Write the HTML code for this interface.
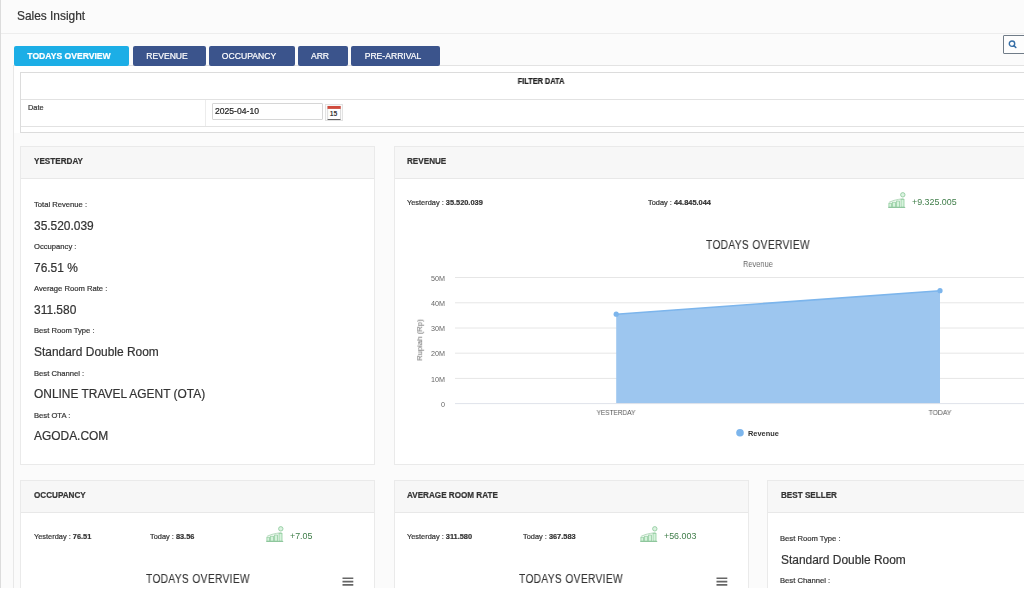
<!DOCTYPE html>
<html><head><meta charset="utf-8"><style>
html,body{margin:0;padding:0;background:#fff;}
#wrap{position:relative;width:1024px;height:600px;overflow:hidden;font-family:"Liberation Sans",sans-serif;}
.r{position:absolute;}
.t{position:absolute;line-height:1;white-space:nowrap;will-change:transform;-webkit-text-stroke:0.2px currentColor;}
b{font-weight:bold;}
</style></head><body><div id="wrap">
<div class="r" style="left:0px;top:0px;width:1024px;height:588px;background:#fbfbfb;"></div>
<div class="r" style="left:0px;top:0px;width:1px;height:588px;background:#dcdcdc;"></div>
<div class="t" style="left:17.00px;top:11.42px;font-size:11.90px;font-weight:normal;color:#333;">Sales Insight</div>
<div class="r" style="left:1px;top:33px;width:1023px;height:1px;background:#ededed;"></div>
<div class="r" style="left:1003px;top:35px;width:30px;height:19px;background:#fdfdfd;border:1px solid #707c88;box-sizing:border-box;border-radius:1px;"></div>
<svg class="r" style="left:1006px;top:38px" width="12" height="12" viewBox="0 0 12 12"><circle cx="6" cy="5.7" r="2.7" fill="none" stroke="#356ea6" stroke-width="1.4"/><line x1="8" y1="7.7" x2="9.8" y2="9.5" stroke="#356ea6" stroke-width="1.6" stroke-linecap="round"/></svg>
<div class="r" style="left:13px;top:65px;width:1011px;height:523px;background:#fff;border-left:1px solid #e8e8e8;border-top:1px solid #e3e3e3;box-sizing:border-box;"></div>
<div class="r" style="left:14px;top:133px;width:1010px;height:455px;background:#fbfbfb;"></div>
<div class="r" style="left:14px;top:46px;width:115px;height:19.5px;background:#1caee6;border-radius:2px;"></div>
<div class="t" style="left:68.70px;top:51.92px;font-size:8.60px;font-weight:bold;color:#fff;transform:translateX(-50%);transform-origin:center top;">TODAYS OVERVIEW</div>
<div class="r" style="left:133px;top:46px;width:73px;height:19.5px;background:#3b548c;border-radius:2px;"></div>
<div class="t" style="left:166.70px;top:51.92px;font-size:8.60px;font-weight:normal;color:#fff;transform:translateX(-50%);transform-origin:center top;">REVENUE</div>
<div class="r" style="left:209px;top:46px;width:86px;height:19.5px;background:#3b548c;border-radius:2px;"></div>
<div class="t" style="left:249.20px;top:51.92px;font-size:8.60px;font-weight:normal;color:#fff;transform:translateX(-50%);transform-origin:center top;">OCCUPANCY</div>
<div class="r" style="left:298px;top:46px;width:50px;height:19.5px;background:#3b548c;border-radius:2px;"></div>
<div class="t" style="left:320.20px;top:51.92px;font-size:8.60px;font-weight:normal;color:#fff;transform:translateX(-50%);transform-origin:center top;">ARR</div>
<div class="r" style="left:351px;top:46px;width:89px;height:19.5px;background:#3b548c;border-radius:2px;"></div>
<div class="t" style="left:392.70px;top:51.92px;font-size:8.60px;font-weight:normal;color:#fff;transform:translateX(-50%);transform-origin:center top;">PRE-ARRIVAL</div>
<div class="r" style="left:20px;top:72px;width:1042px;height:61px;border:1px solid #dcdcdc;box-sizing:border-box;background:#fff;"></div>
<div class="r" style="left:21px;top:99px;width:1040px;height:1px;background:#e2e2e2;"></div>
<div class="r" style="left:21px;top:126px;width:1040px;height:1px;background:#e2e2e2;"></div>
<div class="r" style="left:205px;top:100px;width:1px;height:26px;background:#ececec;"></div>
<div class="t" style="left:541.00px;top:78.36px;font-size:8.20px;font-weight:bold;color:#222;transform:translateX(-50%) scaleX(0.9);transform-origin:center top;">FILTER DATA</div>
<div class="t" style="left:27.50px;top:104.43px;font-size:7.40px;font-weight:normal;color:#333;">Date</div>
<div class="r" style="left:212px;top:103px;width:111px;height:17px;border:1px solid #d6d6d6;box-sizing:border-box;background:#fff;border-radius:1px;"></div>
<div class="t" style="left:215.00px;top:107.02px;font-size:8.60px;font-weight:normal;color:#222;">2025-04-10</div>
<svg class="r" style="left:325px;top:104px" width="18" height="17" viewBox="0 0 18 17">
<rect x="0.5" y="0.5" width="17" height="16" fill="#fbfbfb" stroke="#e2e2e2"/>
<rect x="2.8" y="2.2" width="12.6" height="13.3" fill="#fff" stroke="#c8c8c8" stroke-width="0.6"/>
<rect x="2.5" y="2" width="13.2" height="2.9" fill="#cf4a3c"/>
<path d="M2.6 15.5 H15.5" stroke="#555" stroke-width="0.9"/>
<text x="8.6" y="12.4" font-size="6.8" font-family="Liberation Sans" font-weight="bold" fill="#3a3a3a" text-anchor="middle">15</text>
</svg>
<div class="r" style="left:20px;top:146px;width:355px;height:319px;background:#fff;border:1px solid #eaeaea;box-sizing:border-box;"></div>
<div class="r" style="left:21px;top:147px;width:353px;height:32px;background:#f7f7f7;border-bottom:1px solid #e8e8e8;box-sizing:border-box;"></div>
<div class="t" style="left:33.50px;top:158.20px;font-size:8.15px;font-weight:bold;color:#333;">YESTERDAY</div>
<div class="t" style="left:33.50px;top:200.92px;font-size:7.65px;font-weight:normal;color:#333;">Total Revenue :</div>
<div class="t" style="left:33.70px;top:220.68px;font-size:11.95px;font-weight:normal;color:#333;">35.520.039</div>
<div class="t" style="left:33.50px;top:243.07px;font-size:7.65px;font-weight:normal;color:#333;">Occupancy :</div>
<div class="t" style="left:33.70px;top:262.83px;font-size:11.95px;font-weight:normal;color:#333;">76.51 %</div>
<div class="t" style="left:33.50px;top:285.22px;font-size:7.65px;font-weight:normal;color:#333;">Average Room Rate :</div>
<div class="t" style="left:33.70px;top:304.98px;font-size:11.95px;font-weight:normal;color:#333;">311.580</div>
<div class="t" style="left:33.50px;top:327.37px;font-size:7.65px;font-weight:normal;color:#333;">Best Room Type :</div>
<div class="t" style="left:33.70px;top:347.13px;font-size:11.95px;font-weight:normal;color:#333;">Standard Double Room</div>
<div class="t" style="left:33.50px;top:369.52px;font-size:7.65px;font-weight:normal;color:#333;">Best Channel :</div>
<div class="t" style="left:33.70px;top:389.28px;font-size:11.95px;font-weight:normal;color:#333;">ONLINE TRAVEL AGENT (OTA)</div>
<div class="t" style="left:33.50px;top:411.67px;font-size:7.65px;font-weight:normal;color:#333;">Best OTA :</div>
<div class="t" style="left:33.70px;top:431.43px;font-size:11.95px;font-weight:normal;color:#333;">AGODA.COM</div>
<div class="r" style="left:394px;top:146px;width:727px;height:319px;background:#fff;border:1px solid #eaeaea;box-sizing:border-box;"></div>
<div class="r" style="left:395px;top:147px;width:725px;height:32px;background:#f7f7f7;border-bottom:1px solid #e8e8e8;box-sizing:border-box;"></div>
<div class="t" style="left:406.70px;top:158.20px;font-size:8.15px;font-weight:bold;color:#333;">REVENUE</div>
<div class="t" style="left:407.00px;top:198.53px;font-size:7.40px;font-weight:normal;color:#333;">Yesterday : <b>35.520.039</b></div>
<div class="t" style="left:647.50px;top:198.53px;font-size:7.40px;font-weight:normal;color:#333;">Today : <b>44.845.044</b></div>
<svg class="r" style="left:888.0px;top:191.8px" width="19" height="17" viewBox="0 0 19 17">
<g fill="#d6f3dc" stroke="#92cc9f" stroke-width="0.8">
<rect x="0.9" y="11.2" width="2.6" height="4"/>
<rect x="4.6" y="10.2" width="2.8" height="5"/>
<rect x="8.6" y="9" width="2.8" height="6.2"/>
<rect x="13" y="7.4" width="3" height="7.8"/>
</g>
<path d="M0.3 15.4 H17.2" stroke="#8cc49a" stroke-width="1.1"/>
<path d="M1.2 10.2 L6 8.4 L10.5 7.4 L15.5 6.6" fill="none" stroke="#9fcfaa" stroke-width="0.8"/>
<circle cx="14.8" cy="2.8" r="2.2" fill="#dcf3e1" stroke="#92cc9f" stroke-width="0.9"/>
</svg>
<div class="t" style="left:912.00px;top:197.86px;font-size:8.90px;font-weight:normal;color:#3f7d49;-webkit-text-stroke:0;">+9.325.005</div>
<div class="t" style="left:758.20px;top:239.52px;font-size:11.90px;font-weight:normal;color:#333;transform:translateX(-50%) scaleX(0.86);transform-origin:center top;letter-spacing:0.4px;-webkit-text-stroke:0.1px currentColor;">TODAYS OVERVIEW</div>
<div class="t" style="left:758.00px;top:260.02px;font-size:8.60px;font-weight:normal;color:#666;transform:translateX(-50%) scaleX(0.84);transform-origin:center top;letter-spacing:0.15px;-webkit-text-stroke:0;">Revenue</div>
<svg class="r" style="left:0;top:0" width="1024" height="600"><line x1="455" y1="378.4" x2="1102" y2="378.4" stroke="#e6e6e6" stroke-width="1"/><line x1="455" y1="353.2" x2="1102" y2="353.2" stroke="#e6e6e6" stroke-width="1"/><line x1="455" y1="328.0" x2="1102" y2="328.0" stroke="#e6e6e6" stroke-width="1"/><line x1="455" y1="302.8" x2="1102" y2="302.8" stroke="#e6e6e6" stroke-width="1"/><line x1="455" y1="277.5" x2="1102" y2="277.5" stroke="#e6e6e6" stroke-width="1"/><polygon points="616.2,403.6 616.2,314.2 940,290.7 940,403.6" fill="#9dc6ef"/><polyline points="616.2,314.2 940,290.7" fill="none" stroke="#7cb5ec" stroke-width="1.6"/><line x1="455" y1="403.6" x2="1102" y2="403.6" stroke="#dfe3ea" stroke-width="1"/><circle cx="616.2" cy="314.2" r="2.6" fill="#7cb5ec"/><circle cx="940" cy="290.7" r="2.6" fill="#7cb5ec"/><circle cx="740" cy="432.7" r="3.8" fill="#7cb5ec"/></svg>
<div class="t" style="left:444.70px;top:400.80px;font-size:7.20px;font-weight:normal;color:#666;transform:translateX(-100%);transform-origin:right top;-webkit-text-stroke:0;">0</div>
<div class="t" style="left:444.70px;top:375.60px;font-size:7.20px;font-weight:normal;color:#666;transform:translateX(-100%);transform-origin:right top;-webkit-text-stroke:0;">10M</div>
<div class="t" style="left:444.70px;top:350.40px;font-size:7.20px;font-weight:normal;color:#666;transform:translateX(-100%);transform-origin:right top;-webkit-text-stroke:0;">20M</div>
<div class="t" style="left:444.70px;top:325.20px;font-size:7.20px;font-weight:normal;color:#666;transform:translateX(-100%);transform-origin:right top;-webkit-text-stroke:0;">30M</div>
<div class="t" style="left:444.70px;top:300.00px;font-size:7.20px;font-weight:normal;color:#666;transform:translateX(-100%);transform-origin:right top;-webkit-text-stroke:0;">40M</div>
<div class="t" style="left:444.70px;top:274.70px;font-size:7.20px;font-weight:normal;color:#666;transform:translateX(-100%);transform-origin:right top;-webkit-text-stroke:0;">50M</div>
<div class="t" style="left:616.00px;top:408.90px;font-size:7.20px;font-weight:normal;color:#555;transform:translateX(-50%) scaleX(0.9);transform-origin:center top;-webkit-text-stroke:0;">YESTERDAY</div>
<div class="t" style="left:940.30px;top:408.90px;font-size:7.20px;font-weight:normal;color:#555;transform:translateX(-50%) scaleX(0.95);transform-origin:center top;-webkit-text-stroke:0;">TODAY</div>
<div class="t" style="left:748.00px;top:429.93px;font-size:7.40px;font-weight:bold;color:#333;-webkit-text-stroke:0;">Revenue</div>
<div class="t" style="left:419.5px;top:340px;font-size:7.7px;color:#666;-webkit-text-stroke:0;transform:translate(-50%,-50%) rotate(-90deg);transform-origin:center;line-height:1">Rupiah (Rp)</div>
<div class="r" style="left:20px;top:480px;width:355px;height:200px;background:#fff;border:1px solid #eaeaea;box-sizing:border-box;"></div>
<div class="r" style="left:21px;top:481px;width:353px;height:32px;background:#f7f7f7;border-bottom:1px solid #e8e8e8;box-sizing:border-box;"></div>
<div class="t" style="left:33.50px;top:492.20px;font-size:8.15px;font-weight:bold;color:#333;">OCCUPANCY</div>
<div class="t" style="left:33.50px;top:532.93px;font-size:7.40px;font-weight:normal;color:#333;">Yesterday : <b>76.51</b></div>
<div class="t" style="left:149.80px;top:532.93px;font-size:7.40px;font-weight:normal;color:#333;">Today : <b>83.56</b></div>
<svg class="r" style="left:266.1px;top:526.2px" width="19" height="17" viewBox="0 0 19 17">
<g fill="#d6f3dc" stroke="#92cc9f" stroke-width="0.8">
<rect x="0.9" y="11.2" width="2.6" height="4"/>
<rect x="4.6" y="10.2" width="2.8" height="5"/>
<rect x="8.6" y="9" width="2.8" height="6.2"/>
<rect x="13" y="7.4" width="3" height="7.8"/>
</g>
<path d="M0.3 15.4 H17.2" stroke="#8cc49a" stroke-width="1.1"/>
<path d="M1.2 10.2 L6 8.4 L10.5 7.4 L15.5 6.6" fill="none" stroke="#9fcfaa" stroke-width="0.8"/>
<circle cx="14.8" cy="2.8" r="2.2" fill="#dcf3e1" stroke="#92cc9f" stroke-width="0.9"/>
</svg>
<div class="t" style="left:290.10px;top:532.26px;font-size:8.90px;font-weight:normal;color:#3f7d49;-webkit-text-stroke:0;">+7.05</div>
<div class="t" style="left:197.60px;top:574.42px;font-size:11.90px;font-weight:normal;color:#333;transform:translateX(-50%) scaleX(0.86);transform-origin:center top;letter-spacing:0.4px;-webkit-text-stroke:0.1px currentColor;">TODAYS OVERVIEW</div>
<svg class="r" style="left:342px;top:576.5px" width="12" height="10" viewBox="0 0 12 10"><path d="M0.5 1.3H11.3M0.5 4.6H11.3M0.5 7.9H11.3" stroke="#666" stroke-width="1.6"/></svg>
<div class="r" style="left:394px;top:480px;width:355px;height:200px;background:#fff;border:1px solid #eaeaea;box-sizing:border-box;"></div>
<div class="r" style="left:395px;top:481px;width:353px;height:32px;background:#f7f7f7;border-bottom:1px solid #e8e8e8;box-sizing:border-box;"></div>
<div class="t" style="left:406.70px;top:492.20px;font-size:8.15px;font-weight:bold;color:#333;">AVERAGE ROOM RATE</div>
<div class="t" style="left:407.00px;top:532.93px;font-size:7.40px;font-weight:normal;color:#333;">Yesterday : <b>311.580</b></div>
<div class="t" style="left:523.30px;top:532.93px;font-size:7.40px;font-weight:normal;color:#333;">Today : <b>367.583</b></div>
<svg class="r" style="left:639.6px;top:526.2px" width="19" height="17" viewBox="0 0 19 17">
<g fill="#d6f3dc" stroke="#92cc9f" stroke-width="0.8">
<rect x="0.9" y="11.2" width="2.6" height="4"/>
<rect x="4.6" y="10.2" width="2.8" height="5"/>
<rect x="8.6" y="9" width="2.8" height="6.2"/>
<rect x="13" y="7.4" width="3" height="7.8"/>
</g>
<path d="M0.3 15.4 H17.2" stroke="#8cc49a" stroke-width="1.1"/>
<path d="M1.2 10.2 L6 8.4 L10.5 7.4 L15.5 6.6" fill="none" stroke="#9fcfaa" stroke-width="0.8"/>
<circle cx="14.8" cy="2.8" r="2.2" fill="#dcf3e1" stroke="#92cc9f" stroke-width="0.9"/>
</svg>
<div class="t" style="left:663.60px;top:532.26px;font-size:8.90px;font-weight:normal;color:#3f7d49;-webkit-text-stroke:0;">+56.003</div>
<div class="t" style="left:571.00px;top:574.42px;font-size:11.90px;font-weight:normal;color:#333;transform:translateX(-50%) scaleX(0.86);transform-origin:center top;letter-spacing:0.4px;-webkit-text-stroke:0.1px currentColor;">TODAYS OVERVIEW</div>
<svg class="r" style="left:715.7px;top:576.5px" width="12" height="10" viewBox="0 0 12 10"><path d="M0.5 1.3H11.3M0.5 4.6H11.3M0.5 7.9H11.3" stroke="#666" stroke-width="1.6"/></svg>
<div class="r" style="left:767px;top:480px;width:355px;height:200px;background:#fff;border:1px solid #eaeaea;box-sizing:border-box;"></div>
<div class="r" style="left:768px;top:481px;width:353px;height:32px;background:#f7f7f7;border-bottom:1px solid #e8e8e8;box-sizing:border-box;"></div>
<div class="t" style="left:780.50px;top:492.20px;font-size:8.15px;font-weight:bold;color:#333;">BEST SELLER</div>
<div class="t" style="left:780.40px;top:534.72px;font-size:7.65px;font-weight:normal;color:#333;">Best Room Type :</div>
<div class="t" style="left:780.60px;top:554.68px;font-size:11.95px;font-weight:normal;color:#333;">Standard Double Room</div>
<div class="t" style="left:780.40px;top:576.92px;font-size:7.65px;font-weight:normal;color:#333;">Best Channel :</div>
<div class="r" style="left:0px;top:588px;width:1024px;height:12px;background:#fff;"></div>
</div></body></html>
